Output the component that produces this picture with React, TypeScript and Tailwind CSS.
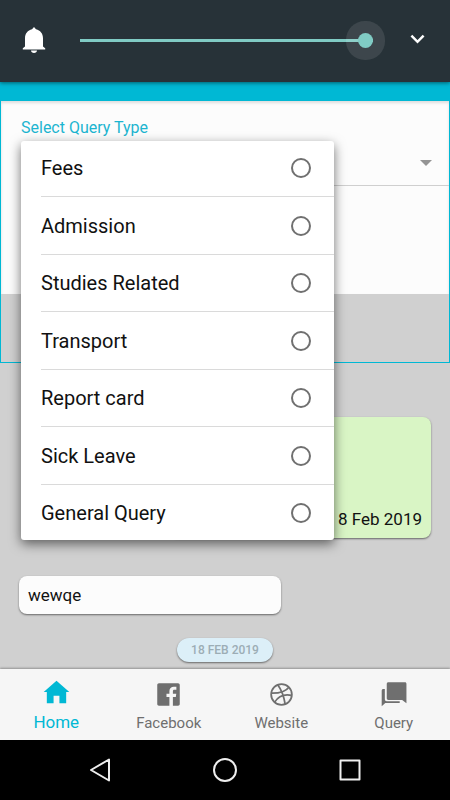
import React, { useState } from "react";

const queryTypes = [
  "Fees",
  "Admission",
  "Studies Related",
  "Transport",
  "Report card",
  "Sick Leave",
  "General Query",
];

function VolumePanel() {
  const [volume, setVolume] = useState(100);
  return (
    <header className="relative z-10 flex h-[82px] items-center bg-[#273238] pr-5 pb-0.5 pl-[18px] shadow-[0_1px_4px_rgba(0,0,0,0.5)]">
      <button type="button" aria-label="Ringer" className="text-white">
        <svg viewBox="0 0 32 32" className="size-8" fill="currentColor">
          <path d="M16 3l2 2.300c4.300 1 7 4.400 7 8.900v8.300l2.200 1.700v1.300H4.800v-1.300L7 22.500v-8.300c0-4.500 2.700-7.900 7-8.900z" />
          <path d="M13 26.500h6c0 1.400-1.300 2.500-3 2.500s-3-1.100-3-2.500z" />
        </svg>
      </button>
      <input
        type="range"
        min={0}
        max={100}
        value={volume}
        onChange={(e) => setVolume(Number(e.target.value))}
        aria-label="Ring volume"
        className="ml-[30px] h-10 min-w-0 flex-1 appearance-none bg-transparent [&::-webkit-slider-runnable-track]:h-[3px] [&::-webkit-slider-runnable-track]:bg-[#80cbc4] [&::-webkit-slider-thumb]:-mt-1.5 [&::-webkit-slider-thumb]:size-[15px] [&::-webkit-slider-thumb]:appearance-none [&::-webkit-slider-thumb]:rounded-full [&::-webkit-slider-thumb]:bg-[#80cbc4] [&::-webkit-slider-thumb]:shadow-[0_0_0_12px_rgba(255,255,255,0.1)]"
      />
      <button type="button" aria-label="Expand" className="ml-[33px] text-white">
        <svg viewBox="0 0 24 24" className="size-6" fill="none" stroke="currentColor" strokeWidth="2.500">
          <path d="M5.400 7.700l6.100 6.100 6.100-6.100" />
        </svg>
      </button>
    </header>
  );
}

function QueryTypeMenu() {
  return (
    <div
      role="radiogroup"
      aria-labelledby="query-type-label"
      className="absolute top-10 left-5 z-10 flex h-[399px] w-[313px] flex-col justify-between rounded-[3px] bg-white shadow-[0_4px_12px_rgba(0,0,0,0.55)]"
    >
      {queryTypes.map((name, i) => (
        <React.Fragment key={name}>
          {i > 0 && <hr className="ml-5 border-t border-[#dadada]" />}
          <label className="flex h-[54px] items-center justify-between pr-[23px] pl-5 text-xl text-[#111]">
            {name}
            <input
              type="radio"
              name="queryType"
              className="size-5 appearance-none rounded-full border-[2px] border-[#707070] checked:border-[6px]"
            />
          </label>
        </React.Fragment>
      ))}
    </div>
  );
}

function QueryForm() {
  return (
    <form className="relative flex flex-col border border-[#00b8d4] bg-[#d0d0d0]">
      <div className="bg-[#fcfcfc] pt-[15px] shadow-[inset_0_2px_3px_rgba(0,0,0,0.12)]">
        <span id="query-type-label" className="ml-5 block text-base text-[#1cb5d0]">
          Select Query Type
        </span>
        <button
          type="button"
          aria-label="Choose query type"
          className="ml-5 flex h-[46px] w-[calc(100%-20px)] items-center justify-end border-b border-[#cfcfcf] pr-[17px]"
        >
          <svg viewBox="0 0 12 6" className="h-1.5 w-3" fill="#949494">
            <path d="M0 0h12L6 6z" />
          </svg>
        </button>
        <textarea aria-label="Your query" className="block h-[108px] w-full resize-none bg-transparent px-5 py-3 outline-none" />
      </div>
      <div className="h-[68px]" />
      <QueryTypeMenu />
    </form>
  );
}

function Messages() {
  return (
    <main className="flex flex-1 flex-col px-[19px] pt-[54px] pb-[7px] text-[17px]/7 text-[#111]">
      <p className="flex h-[121px] w-[260px] items-end justify-end self-end rounded-lg bg-[#d9f5c5] px-[9px] pb-[5px] shadow-[0_1px_2px_rgba(0,0,0,0.5)]">
        8 Feb 2019
      </p>
      <p className="mt-[38px] w-[262px] rounded-lg bg-[#fcfcfc] px-[9px] py-[5px] shadow-[0_1px_2px_rgba(0,0,0,0.5)]">
        wewqe
      </p>
      <time className="mt-6 self-center rounded-full bg-[#dceff8] px-[14px] py-1 text-xs font-medium text-[#9cadb5] shadow-[0_1px_2px_rgba(0,0,0,0.5)]">
        18 FEB 2019
      </time>
    </main>
  );
}

function Tab({ label, active, children }: { label: string; active?: boolean; children: React.ReactNode }) {
  return (
    <a
      href="#"
      aria-current={active ? "page" : undefined}
      className={
        "flex flex-1 flex-col items-center " +
        (active ? "gap-0.5 pt-2.5 text-[17px]/7 text-[#00b8d4]" : "gap-px pt-3 text-[15px]/7 text-[#6f6f6f]")
      }
    >
      <svg viewBox="0 0 24 24" className="size-[27px]" fill="currentColor">
        {children}
      </svg>
      {label}
    </a>
  );
}

function TabBar() {
  return (
    <nav className="relative flex h-[71px] bg-[#f6f6f6] shadow-[0_-1px_2px_rgba(0,0,0,0.3)]">
      <Tab label="Home" active>
        <path d="M9.400 21.500v-6.700h5.200v6.700h6V11.600h2.800L12 1.500.600 11.600h2.800v9.900z" />
      </Tab>
      <Tab label="Facebook">
        <path d="M20.5 2h-17C2.7 2 2 2.7 2 3.5v17c0 .8.7 1.5 1.5 1.5h9.300v-7.7h-2.600v-3h2.600V9c0-2.600 1.600-4 3.900-4 1.100 0 2 .1 2.300.1v2.700h-1.600c-1.300 0-1.500.6-1.500 1.500v2h3l-.4 3h-2.600V22h4.600c.8 0 1.500-.7 1.500-1.500v-17c0-.8-.7-1.500-1.500-1.500z" />
      </Tab>
      <Tab label="Website">
        <g fill="none" stroke="currentColor" strokeWidth="1.600">
          <circle cx="12" cy="12" r="9.200" />
          <path d="M8.600 3.300c3.200 4.200 5.400 9.200 6.700 17.600M18.800 5.300c-3 4-8.500 5.700-16 5.500M21.300 12.800c-6.800-1.500-12.200.700-15.500 6.200" />
        </g>
      </Tab>
      <Tab label="Query">
        <path d="M22.200 1H7.500C6.600 1 6 1.600 6 2.500v12.800c0 .9.600 1.500 1.500 1.500h12.200l3.800 3V2.500c0-.9-.5-1.500-1.300-1.500zM4.300 7.200H3c-.8 0-1.500.600-1.500 1.500v13.800l3.200-3H17.500v-1.500H6c-1 0-1.700-.7-1.700-1.700z" />
      </Tab>
    </nav>
  );
}

function SystemBar() {
  return (
    <footer className="relative flex h-[60px] items-center justify-around bg-black px-[38px]">
      <button type="button" aria-label="Back">
        <svg viewBox="0 0 24 24" className="size-6" fill="none" stroke="#eee" strokeWidth="2" strokeLinejoin="round">
          <path d="M21 1.500v21L3 12z" />
        </svg>
      </button>
      <button type="button" aria-label="Home">
        <svg viewBox="0 0 24 24" className="size-6" fill="none" stroke="#eee" strokeWidth="2">
          <circle cx="12" cy="12" r="11" />
        </svg>
      </button>
      <button type="button" aria-label="Recent apps">
        <svg viewBox="0 0 24 24" className="size-6" fill="none" stroke="#eee" strokeWidth="2" strokeLinejoin="round">
          <path d="M2.500 2.500h19v19h-19z" />
        </svg>
      </button>
    </footer>
  );
}

export default function App() {
  return (
    <div className="flex min-h-screen flex-col bg-[#d0d0d0] font-['Roboto',sans-serif]">
      <VolumePanel />
      <div className="h-[18px] bg-[#00b8d4]" />
      <QueryForm />
      <Messages />
      <TabBar />
      <SystemBar />
    </div>
  );
}
